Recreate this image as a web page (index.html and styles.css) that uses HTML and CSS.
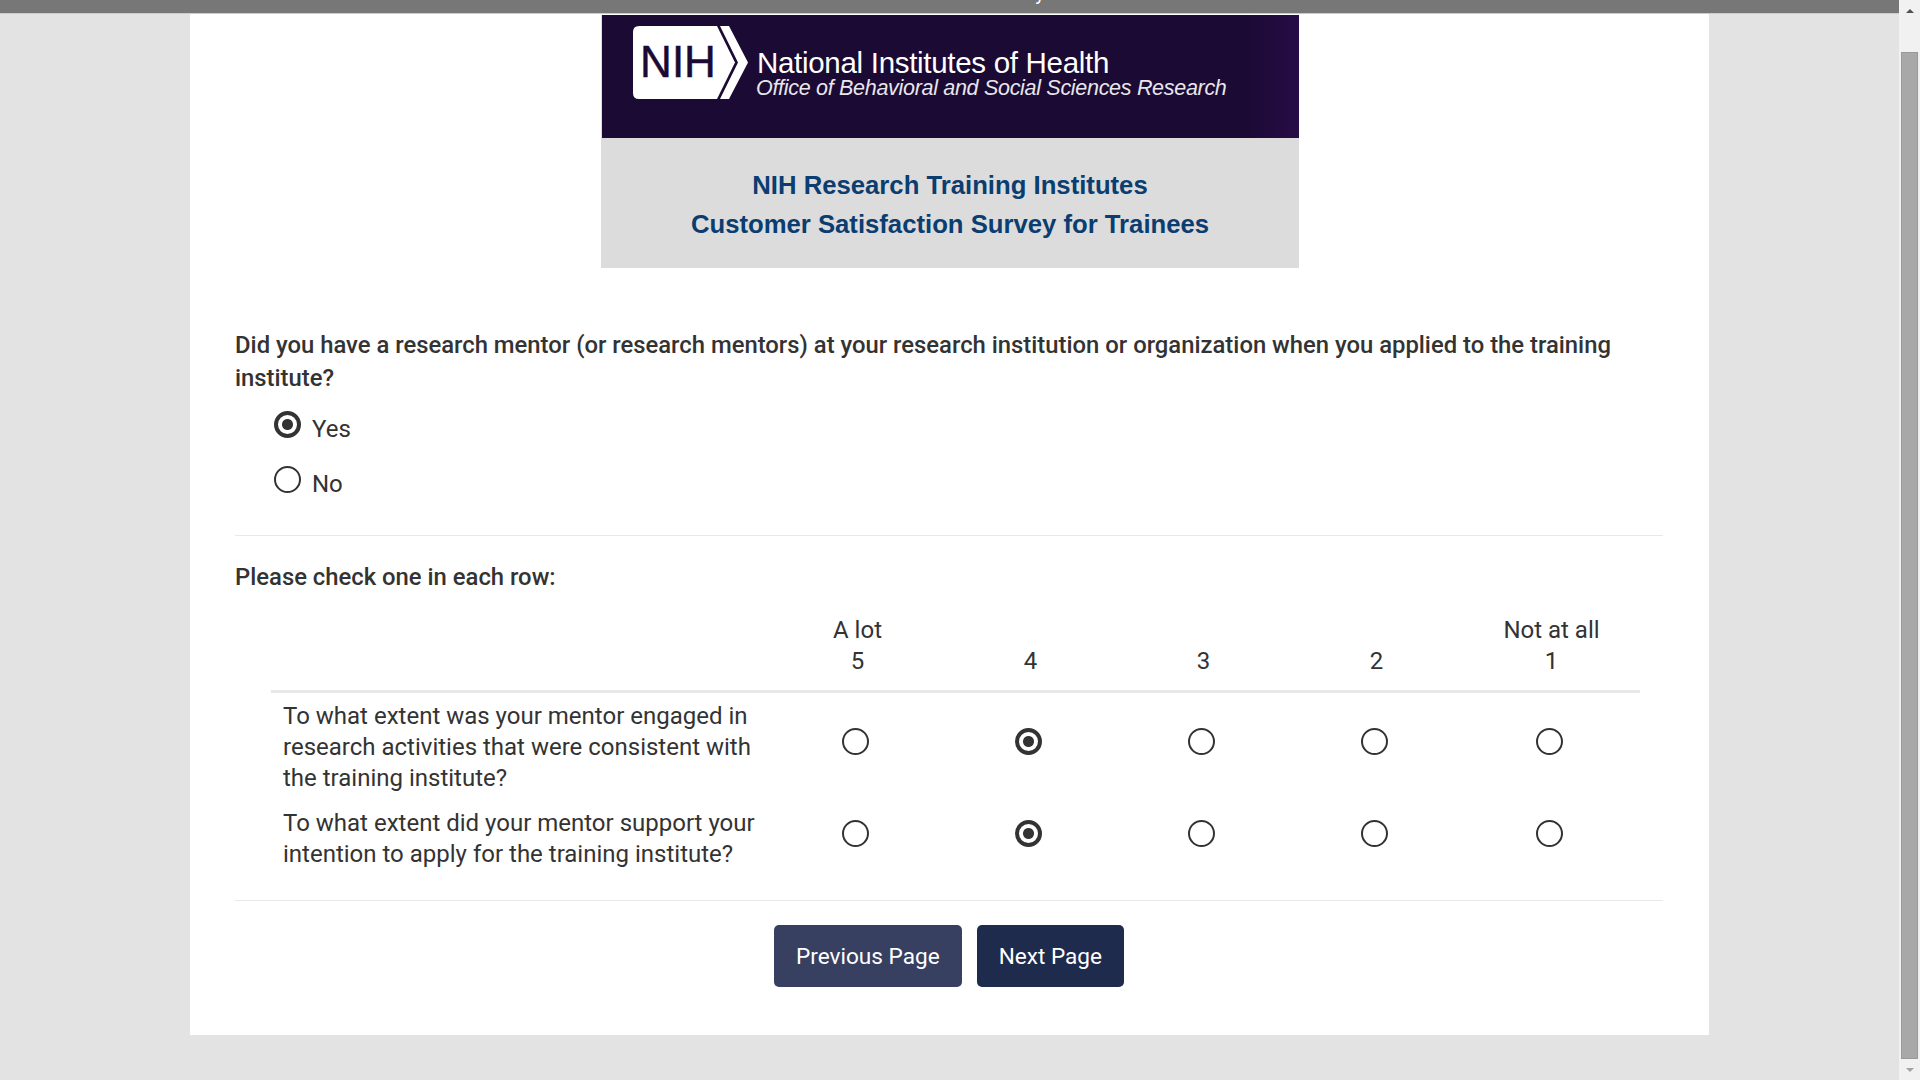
FILE: index.html
```html
<!DOCTYPE html>
<html lang="en">
<head>
  <meta charset="UTF-8">
  <meta name="viewport" content="width=device-width, initial-scale=1.0">
  <title>NIH Research Training Institutes Survey</title>
  <link rel="stylesheet" href="styles.css">
</head>
<body>
  <div class="page">
    <div class="main">
      <!-- Top bar, its title is scrolled nearly out of view -->
      <div class="top-bar"><span class="top-bar-title">y</span></div>

      <div class="card">
        <!-- Banner -->
        <div class="banner">
          <div class="banner-logo">
            <svg class="nih-mark" width="115" height="73" viewBox="0 0 115 73">
              <path d="M6 0H84L102 36.5L84 73H6Q0 73 0 67V6Q0 0 6 0Z" fill="#fff"/>
              <polygon points="87,0 96,0 115,36.5 96,73 87,73 105,36.5" fill="#fff"/>
              <text class="nih-letters" x="45" y="51" text-anchor="middle">NIH</text>
            </svg>
            <div class="banner-names">
              <div class="banner-name">National Institutes of Health</div>
              <div class="banner-office">Office of Behavioral and Social Sciences Research</div>
            </div>
          </div>
          <div class="banner-title">
            NIH Research Training Institutes<br>
            Customer Satisfaction Survey for Trainees
          </div>
        </div>

        <!-- Question 1 -->
        <p class="question">Did you have a research mentor (or research mentors) at your research institution or organization when you applied to the training institute?</p>
        <label class="choice"><input type="radio" name="mentor" checked><span>Yes</span></label>
        <label class="choice"><input type="radio" name="mentor"><span>No</span></label>

        <hr class="rule rule-first">

        <!-- Question 2 -->
        <p class="question">Please check one in each row:</p>
        <table class="matrix">
          <thead>
            <tr>
              <th></th>
              <th>A lot<br>5</th>
              <th>4</th>
              <th>3</th>
              <th>2</th>
              <th>Not at all<br>1</th>
            </tr>
          </thead>
          <tbody>
            <tr>
              <td class="row-label">To what extent was your mentor engaged in research activities that were consistent with the training institute?</td>
              <td><input type="radio" name="q1"></td>
              <td><input type="radio" name="q1" checked></td>
              <td><input type="radio" name="q1"></td>
              <td><input type="radio" name="q1"></td>
              <td><input type="radio" name="q1"></td>
            </tr>
            <tr>
              <td class="row-label">To what extent did your mentor support your intention to apply for the training institute?</td>
              <td><input type="radio" name="q2"></td>
              <td><input type="radio" name="q2" checked></td>
              <td><input type="radio" name="q2"></td>
              <td><input type="radio" name="q2"></td>
              <td><input type="radio" name="q2"></td>
            </tr>
          </tbody>
        </table>

        <hr class="rule">

        <div class="buttons">
          <button class="btn btn-prev">Previous Page</button>
          <button class="btn btn-next">Next Page</button>
        </div>
      </div>
    </div>

    <!-- Scrollbar -->
    <div class="scrollbar">
      <div class="arrow arrow-up"></div>
      <div class="thumb"></div>
      <div class="arrow arrow-down"></div>
    </div>
  </div>
</body>
</html>
```

FILE: styles.css
```css
html, body {
  margin: 0;
  padding: 0;
  height: 100%;
  overflow: hidden;
}

body {
  font-family: Roboto, "Liberation Sans", sans-serif;
  font-size: 24px;
  color: #333;
  background-color: #e3e3e3;
}

.page {
  display: flex;
  height: 1080px;
}

.main {
  flex: 1;
  min-width: 0;
}

/* Top bar */
.top-bar {
  height: 13px;
  background-color: #777;
  border-bottom: 1px solid #ccc;
  overflow: hidden;
  text-align: center;
}

.top-bar-title {
  display: block;
  margin: -19px 0 0 181px;
  font-size: 20px;
  line-height: 24px;
  color: #fff;
}

/* Card */
.card {
  width: 1428px;
  height: 1020px;
  margin-left: 190px;
  padding: 1px 46px 0 45px;
  background-color: #fff;
}

/* Banner */
.banner {
  width: 698px;
  margin: 0 0 0 366px;
  background-color: #dcdcdc;
}

.banner-logo {
  display: flex;
  align-items: center;
  gap: 9px;
  height: 123px;
  margin-left: 1px;
  padding: 0 0 28px 31px;
  box-sizing: border-box;
  background: linear-gradient(90deg, #1b0a33 92%, #270c47);
  color: #fff;
}

.nih-mark {
  flex: none;
}

.nih-letters {
  fill: #1b0a33;
  stroke: #1b0a33;
  stroke-width: 0.5;
  font-family: "Liberation Sans", sans-serif;
  font-size: 44px;
}

.banner-names {
  margin-top: 22px;
  font-family: "Liberation Sans", sans-serif;
}

.banner-name {
  font-size: 29.5px;
  line-height: 30px;
  letter-spacing: -0.3px;
}

.banner-office {
  margin-left: -1px;
  font-size: 21.5px;
  line-height: 21px;
  font-style: italic;
  letter-spacing: -0.3px;
  color: #e8e6ec;
}

.banner-title {
  height: 130px;
  padding-top: 28px;
  box-sizing: border-box;
  color: #0b3d70;
  font-family: "Liberation Sans", sans-serif;
  font-size: 25.7px;
  font-weight: bold;
  line-height: 39px;
  text-align: center;
}

/* Questions */
.question {
  margin: 0 0 2px;
  padding-top: 61px;
  font-size: 23.84px;
  font-weight: 500;
  line-height: 33px;
}

.rule-first + .question {
  padding-top: 25px;
}

.choice {
  display: flex;
  align-items: center;
  gap: 11px;
  height: 55px;
  padding-left: 39px;
}

.choice span {
  padding-top: 8px;
}

input[type="radio"] {
  appearance: none;
  display: block;
  width: 27px;
  height: 27px;
  margin: 0;
  border: 2px solid #333;
  border-radius: 50%;
  box-sizing: border-box;
  background-color: #fff;
}

input[type="radio"]:checked {
  border-width: 4px;
  background: radial-gradient(circle, #333 0 5px, #fff 6px);
}

.rule {
  margin: 0;
  border: 0;
  border-top: 1px solid #e8e8e8;
}

.rule-first {
  margin-top: 28px;
}

/* Table of ratings */
.matrix {
  width: 1369px;
  margin: 21px 0 24px 36px;
  border-collapse: collapse;
  table-layout: fixed;
}

.matrix th {
  width: 173px;
  padding: 0 0 13px;
  border-bottom: 3px solid #e8e8e8;
  font-weight: 400;
  line-height: 31px;
  text-align: center;
  vertical-align: bottom;
}

.matrix th:first-child {
  width: 500px;
}

.matrix th:last-child {
  width: 177px;
}

.matrix td {
  padding: 8px 0 6px;
  line-height: 31px;
}

.matrix td input {
  margin: 0 auto;
  transform: translate(-2px, -6px);
}

.matrix .row-label {
  padding-left: 12px;
  padding-right: 10px;
}

/* Buttons */
.buttons {
  display: flex;
  justify-content: center;
  gap: 15px;
  padding-top: 24px;
}

.btn {
  height: 62px;
  padding: 0 22px;
  border: 0;
  border-radius: 5px;
  color: #fff;
  font-family: Roboto, sans-serif;
  font-size: 22.6px;
  font-weight: 400;
}

.btn-prev {
  background-color: #374060;
}

.btn-next {
  background-color: #1f2b4d;
}

/* Scrollbar */
.scrollbar {
  display: flex;
  flex-direction: column;
  align-items: center;
  width: 21px;
  background-color: #f1f1f1;
}

.thumb {
  flex: 1;
  width: 17px;
  margin: 39px 0 9px;
  background-color: #a8a8a8;
  box-sizing: border-box;
  border: 1px solid #999;
}

.arrow {
  width: 0;
  height: 0;
  border-left: 4px solid transparent;
  border-right: 4px solid transparent;
}

.arrow-up {
  margin-top: 9px;
  border-bottom: 4px solid #505050;
}

.arrow-down {
  margin-bottom: 8px;
  border-top: 4px solid #a3a3a3;
}
```
